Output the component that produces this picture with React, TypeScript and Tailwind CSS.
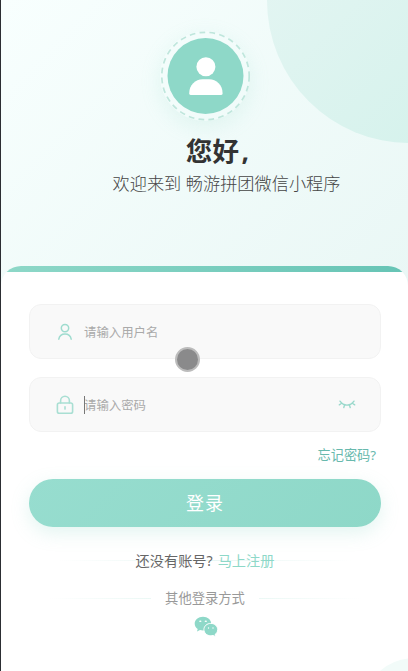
import type { ReactNode } from 'react';

function AvatarIcon() {
  return (
    <svg viewBox="0 0 90 90" className="w-[90px] h-[90px]">
      <circle
        cx="45.5"
        cy="45"
        r="43.7"
        fill="none"
        stroke="#bfe6dc"
        strokeWidth="1.7"
        strokeDasharray="5.7 4.28"
      />
      <circle cx="45.5" cy="45" r="38" fill="#8ed8c8" />
      <circle cx="45.9" cy="35.7" r="9.5" fill="#fff" />
      <path d="M29.2 62.5c0-8.6 6.2-14.2 13.4-14.2h6.600c7.200 0 13.400 5.600 13.400 14.200 0 .9-.5 1.400-1.400 1.400H30.600c-.9 0-1.400-.5-1.400-1.400Z" fill="#fff" />
    </svg>
  );
}

function UserIcon() {
  return (
    <svg viewBox="0 0 18 18" className="w-[18px] h-[18px]" fill="none" stroke="#9fdccf" strokeWidth="1.5" strokeLinecap="round">
      <circle cx="9" cy="5.1" r="3.7" />
      <path d="M2.8 16.2a6.3 6.3 0 0 1 12.4 0" />
    </svg>
  );
}

function LockIcon() {
  return (
    <svg viewBox="0 0 18 20" className="w-[18px] h-[20px]" fill="none" stroke="#a9dfd3" strokeWidth="1.6" strokeLinecap="round">
      <rect x="1.4" y="8" width="15.2" height="10.2" rx="1.8" />
      <path d="M4.600 8V5.700a4.400 4.400 0 0 1 8.800 0V8M9 11.800v2.300" />
    </svg>
  );
}

function EyeClosedIcon() {
  return (
    <svg viewBox="0 0 18 10" className="w-[18px] h-[10px]" fill="none" stroke="#9ad9cc" strokeWidth="1.4" strokeLinecap="round">
      <path d="M2 1.2c1.7 2.5 4.1 3.9 7 3.9s5.3-1.4 7-3.9M3.300 3.500 1.300 4.800M6.500 5 5.800 7.600M11.500 5l.7 2.600M14.700 3.500l2 1.300" />
    </svg>
  );
}

function WechatIcon() {
  return (
    <svg viewBox="0 0 24 22" className="w-6 h-[22px]">
      <path d="M9 .7C4.300.7.7 3.700.7 7.700c0 2.200 1.200 4.100 3 5.400l-.7 2.500 3-1.500c1 .3 2 .5 3.100.5 4.600 0 8.100-3.100 8.100-6.900S13.600.7 9 .7Z" fill="#8ed8c8" />
      <path d="M16.800 7.400c-3.900 0-6.900 2.800-6.900 6.200s3 6.200 6.900 6.200c.8 0 1.600-.1 2.300-.4l2.500 1.400-.6-2.200c1.700-1.200 2.700-3 2.700-5 0-3.400-3-6.200-6.900-6.200Z" fill="#8ed8c8" stroke="#fff" strokeWidth="1" />
      <g fill="#fff">
        <ellipse cx="6.3" cy="5.3" rx="1.2" ry=".7" />
        <ellipse cx="11.8" cy="5.3" rx="1.2" ry=".7" />
        <circle cx="14.5" cy="12" r=".7" />
        <circle cx="19" cy="12" r=".7" />
      </g>
    </svg>
  );
}

function Field({ icon, children }: { icon: ReactNode; children: ReactNode }) {
  return (
    <div className="flex h-[55px] items-center rounded-xl border border-[#f2f2f2] bg-[#f9f9f9] pl-[26px] pr-6">
      <div className="flex w-[28px] shrink-0">{icon}</div>
      {children}
    </div>
  );
}

export default function App() {
  return (
    <div className="relative flex h-[671px] w-[408px] flex-col overflow-hidden border-l border-[#2c2e33] bg-[linear-gradient(135deg,#f8fffe_0%,#e9f7f5_100%)] bg-[length:100%_300px] bg-no-repeat font-['Noto_Sans','Noto_Sans_CJK_SC',sans-serif]">
      <div className="absolute left-[266px] top-[-142px] h-[285px] w-[285px] rounded-full bg-[linear-gradient(135deg,#e3f5f2_20%,#d5f2ec_80%)]" />

      <header className="relative flex h-[266px] shrink-0 flex-col items-center pl-px pt-[31px]">
        <div className="h-[90px] rounded-full shadow-[0_6px_20px_rgba(142,216,200,0.18)]">
          <AvatarIcon />
        </div>
        <h1 className="mt-[13px] whitespace-nowrap pl-[25px] text-[26.5px] font-bold leading-[34px] tracking-[0.3px] text-[#333]">
          您好<span className="ml-[2px]">, </span>
        </h1>
        <p className="ml-[43px] mt-1 whitespace-nowrap text-[17.2px] font-light leading-6 text-[#444]">
          欢迎来到 畅游拼团微信小程序
        </p>
      </header>

      <main className="relative flex-1 overflow-hidden rounded-t-[20px] bg-white">
        <div className="h-[6px] bg-[linear-gradient(90deg,#8ed8c8,#66c4b5)]" />
        <div className="absolute bottom-[-95px] right-[-61px] h-[108px] w-[108px] rounded-full bg-[#f2fbf9]" />

        <div className="flex flex-col pl-[28px] pr-[27px] pt-8">
          <Field icon={<UserIcon />}>
            <span className="pt-0.5 text-[12.4px] leading-5 text-[#aaa]">请输入用户名</span>
          </Field>
          <div className="h-[18px]" />
          <Field icon={<LockIcon />}>
            <span className="relative pt-0.5 text-[12.4px] leading-5 text-[#aaa]">
              请输入密码
              <i className="absolute left-0 top-0.5 h-[18px] w-px bg-[#777]" />
            </span>
            <span className="ml-auto">
              <EyeClosedIcon />
            </span>
          </Field>

          <a className="mr-[5px] mt-[13px] self-end text-[13.2px] leading-5 text-[#68b9ad]">忘记密码?</a>

          <button className="mt-[14px] h-12 rounded-full bg-[linear-gradient(135deg,#97ddcf,#8ed8c8)] pt-px text-[18px] tracking-[1px] text-white shadow-[0_6px_18px_rgba(142,216,200,0.25)]">
            登录
          </button>

          <div className="relative mt-[23px] flex h-[22px] items-center justify-center">
            <div className="absolute left-[30px] right-[30px] top-[10px] h-px bg-[linear-gradient(90deg,transparent,#e7f6f3,transparent)]" />
            <p className="relative whitespace-nowrap text-[14.2px] text-[#666]">
              还没有账号?<span className="ml-[5px] text-[#8ed8c8]">马上注册</span>
            </p>
          </div>

          <div className="mt-[16px] flex h-5 items-center px-[20px]">
            <div className="h-px flex-1 bg-[linear-gradient(90deg,transparent,#ebf8f5)]" />
            <span className="mx-[14px] text-[13.3px] leading-5 text-[#999]">其他登录方式</span>
            <div className="h-px flex-1 bg-[linear-gradient(90deg,#ebf8f5,transparent)]" />
          </div>

          <div className="mt-[8px] flex justify-center pl-0.5">
            <WechatIcon />
          </div>
        </div>
      </main>

      <div className="absolute left-[174px] top-[347px] h-[25px] w-[25px] rounded-full border-[2.5px] border-[#bcbcbc] bg-[#8a8a8b]" />
    </div>
  );
}
